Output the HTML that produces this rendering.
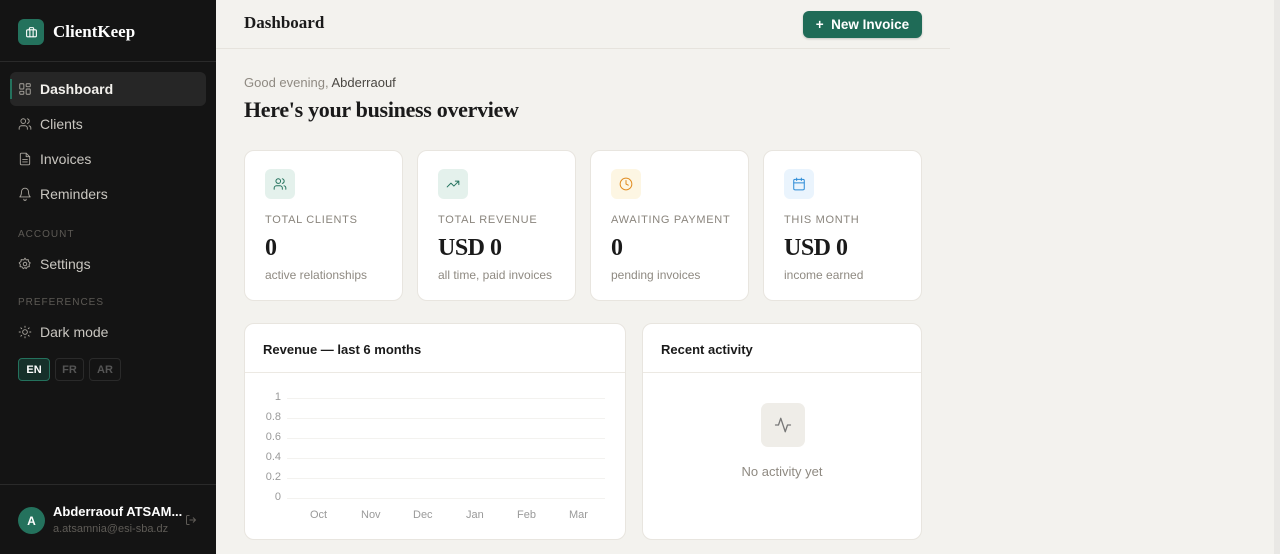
<!DOCTYPE html>
<html><head><meta charset="utf-8"><style>
*{box-sizing:border-box;margin:0;padding:0}
body{width:1280px;height:554px;overflow:hidden;background:#f3f2ee;font-family:"Liberation Sans",sans-serif;position:relative}
.sb{position:absolute;left:0;top:0;width:216px;height:554px;background:#141414;color:#c9c6c0}
.abs{position:absolute}
.nav{position:absolute;left:10px;width:196px;height:34px;display:flex;align-items:center;padding-left:8px;font-size:14px;color:#c9c6c0;gap:8px}
.nav svg{width:14px;height:14px;stroke:#a8a49d;fill:none;stroke-width:1.6;stroke-linecap:round;stroke-linejoin:round}
.sec{position:absolute;left:18px;font-size:10px;letter-spacing:1px;color:#5d5a55}
.serif{font-family:"Liberation Serif",serif;font-weight:bold}
.card{position:absolute;background:#fff;border:1px solid #e8e5df;border-radius:10px}
.ic{position:absolute;left:20px;top:18px;width:30px;height:30px;border-radius:6px;display:flex;align-items:center;justify-content:center}
.ic svg{width:14px;height:14px;fill:none;stroke-width:1.7;stroke-linecap:round;stroke-linejoin:round}
.lbl{position:absolute;left:20px;top:63px;font-size:11px;letter-spacing:0.7px;color:#8a857d}
.val{position:absolute;left:20px;top:84px;font-size:24px;color:#1a1a1a;letter-spacing:-0.5px}
.sub{position:absolute;left:20px;top:117px;font-size:12px;color:#8f8a82}
.yl{position:absolute;font-size:11px;color:#9a9a9a;text-align:right;width:20px}
.gl{position:absolute;left:42px;width:318px;height:1px;background:#f3f2ef}
.xl{position:absolute;top:185px;font-size:11px;color:#9a9a9a}
</style></head><body>
<div class="sb">
 <div class="abs" style="left:18px;top:19px;width:26px;height:26px;background:#24725d;border-radius:6px;display:flex;align-items:center;justify-content:center">
  <svg width="13" height="13" viewBox="0 0 24 24" fill="none" stroke="#fff" stroke-width="2"><rect x="3" y="7" width="18" height="13" rx="2"/><path d="M8 7V5a2 2 0 0 1 2-2h4a2 2 0 0 1 2 2v2M9 7v13M15 7v13"/></svg>
 </div>
 <div class="abs serif" style="left:53px;top:22px;font-size:17px;color:#fff">ClientKeep</div>
 <div class="abs" style="left:0;top:61px;width:216px;height:1px;background:#2a2a2a"></div>
 <div class="nav" style="top:72px;background:#262626;border-radius:6px;color:#fff"><svg viewBox="0 0 24 24"><rect x="3" y="3" width="7" height="9" rx="1"/><rect x="14" y="3" width="7" height="5" rx="1"/><rect x="14" y="12" width="7" height="9" rx="1"/><rect x="3" y="16" width="7" height="5" rx="1"/></svg><span style="font-weight:600;color:#f2f0ec">Dashboard</span></div>
 <div class="abs" style="left:10px;top:79px;width:2px;height:20px;background:#24725d"></div>
 <div class="nav" style="top:107px"><svg viewBox="0 0 24 24"><circle cx="9" cy="7" r="4"/><path d="M2 21v-2a4 4 0 0 1 4-4h6a4 4 0 0 1 4 4v2M16 3.1a4 4 0 0 1 0 7.8M22 21v-2a4 4 0 0 0-3-3.9"/></svg>Clients</div>
 <div class="nav" style="top:142px"><svg viewBox="0 0 24 24"><path d="M14 2H6a2 2 0 0 0-2 2v16a2 2 0 0 0 2 2h12a2 2 0 0 0 2-2V8z"/><path d="M14 2v6h6M8 13h8M8 17h8"/></svg>Invoices</div>
 <div class="nav" style="top:177px"><svg viewBox="0 0 24 24"><path d="M6 8a6 6 0 0 1 12 0c0 7 3 9 3 9H3s3-2 3-9M10 21a2 2 0 0 0 4 0"/></svg>Reminders</div>
 <div class="sec" style="top:229px">ACCOUNT</div>
 <div class="nav" style="top:247px"><svg viewBox="0 0 24 24"><circle cx="12" cy="12" r="3"/><path d="M12 2l2 3 3.5-.5.5 3.5 3 2-2 3 .5 3.5-3.5.5-2 3-2-2-3 2-2-3-3.5-.5.5-3.5-2-3 3-2 .5-3.5L10 5z"/></svg>Settings</div>
 <div class="sec" style="top:297px">PREFERENCES</div>
 <div class="nav" style="top:315px"><svg viewBox="0 0 24 24"><circle cx="12" cy="12" r="4"/><path d="M12 2v2M12 20v2M4.9 4.9l1.4 1.4M17.7 17.7l1.4 1.4M2 12h2M20 12h2M4.9 19.1l1.4-1.4M17.7 6.3l1.4-1.4"/></svg>Dark mode</div>
 <div class="abs" style="left:18px;top:358px;width:32px;height:23px;border:1px solid #24725d;background:#16302a;border-radius:4px;color:#fff;font-size:11px;font-weight:bold;display:flex;align-items:center;justify-content:center">EN</div>
 <div class="abs" style="left:55px;top:358px;width:29px;height:23px;border:1px solid #2a2a2a;border-radius:4px;color:#555;font-size:11px;font-weight:bold;display:flex;align-items:center;justify-content:center">FR</div>
 <div class="abs" style="left:89px;top:358px;width:32px;height:23px;border:1px solid #2a2a2a;border-radius:4px;color:#555;font-size:11px;font-weight:bold;display:flex;align-items:center;justify-content:center">AR</div>
 <div class="abs" style="left:0;top:484px;width:216px;height:1px;background:#2a2a2a"></div>
 <div class="abs" style="left:18px;top:507px;width:27px;height:27px;border-radius:50%;background:#24725d;color:#fff;font-size:12px;font-weight:bold;display:flex;align-items:center;justify-content:center">A</div>
 <div class="abs" style="left:53px;top:504px;font-size:13px;font-weight:bold;color:#fff">Abderraouf ATSAM...</div>
 <div class="abs" style="left:53px;top:523px;font-size:11px;color:#5f5c57">a.atsamnia@esi-sba.dz</div>
 <svg class="abs" style="left:185px;top:514px" width="12" height="12" viewBox="0 0 24 24" fill="none" stroke="#5f5c57" stroke-width="2"><path d="M9 21H5a2 2 0 0 1-2-2V5a2 2 0 0 1 2-2h4M16 17l5-5-5-5M21 12H9"/></svg>
</div>
<div class="abs serif" style="left:244px;top:13px;font-size:17px;color:#1a1a1a">Dashboard</div>
<div class="abs" style="left:803px;top:11px;width:119px;height:27px;background:#1f6b57;border-radius:6px;color:#fff;font-size:13.5px;font-weight:600;display:flex;align-items:center;justify-content:center;box-shadow:0 1px 2px rgba(0,0,0,.2)">+&nbsp;&nbsp;New Invoice</div>
<div class="abs" style="left:216px;top:48px;width:734px;height:1px;background:#e6e3dd"></div>
<div class="abs" style="left:1274px;top:0;width:6px;height:554px;background:#e9e8e5"></div>
<div class="abs" style="left:244px;top:75px;font-size:13px;color:#8f8a82">Good evening, <span style="color:#4a4742">Abderraouf</span></div>
<div class="abs serif" style="left:244px;top:97px;font-size:22px;color:#1a1a1a;letter-spacing:-0.3px">Here's your business overview</div>

<div class="card" style="left:244px;top:150px;width:159px;height:151px"><div class="ic" style="background:#e4f1ec"><svg viewBox="0 0 24 24" stroke="#24725d"><circle cx="9" cy="7" r="4"/><path d="M2 21v-2a4 4 0 0 1 4-4h6a4 4 0 0 1 4 4v2M16 3.1a4 4 0 0 1 0 7.8M22 21v-2a4 4 0 0 0-3-3.9"/></svg></div><div class="lbl">TOTAL CLIENTS</div><div class="val serif">0</div><div class="sub">active relationships</div></div>
<div class="card" style="left:417px;top:150px;width:159px;height:151px"><div class="ic" style="background:#e4f1ec"><svg viewBox="0 0 24 24" stroke="#24725d"><path d="M22 7l-8.5 8.5-5-5L2 17M16 7h6v6"/></svg></div><div class="lbl">TOTAL REVENUE</div><div class="val serif">USD 0</div><div class="sub">all time, paid invoices</div></div>
<div class="card" style="left:590px;top:150px;width:159px;height:151px"><div class="ic" style="background:#fdf6e3"><svg viewBox="0 0 24 24" stroke="#e08a1e"><circle cx="12" cy="12" r="10"/><path d="M12 6v6l4 2"/></svg></div><div class="lbl">AWAITING PAYMENT</div><div class="val serif">0</div><div class="sub">pending invoices</div></div>
<div class="card" style="left:763px;top:150px;width:159px;height:151px"><div class="ic" style="background:#eaf4fd"><svg viewBox="0 0 24 24" stroke="#2a8ad6"><rect x="3" y="4" width="18" height="18" rx="2"/><path d="M16 2v4M8 2v4M3 10h18"/></svg></div><div class="lbl">THIS MONTH</div><div class="val serif">USD 0</div><div class="sub">income earned</div></div>

<div class="card" style="left:244px;top:323px;width:382px;height:217px">
 <div class="abs" style="left:18px;top:18px;font-size:13px;font-weight:600;color:#1a1a1a">Revenue — last 6 months</div>
 <div class="abs" style="left:0;top:48px;width:380px;height:1px;background:#ece9e3"></div>
 <div class="yl" style="left:16px;top:67px">1</div><div class="gl" style="top:74px"></div>
 <div class="yl" style="left:16px;top:87px">0.8</div><div class="gl" style="top:94px"></div>
 <div class="yl" style="left:16px;top:107px">0.6</div><div class="gl" style="top:114px"></div>
 <div class="yl" style="left:16px;top:127px">0.4</div><div class="gl" style="top:134px"></div>
 <div class="yl" style="left:16px;top:147px">0.2</div><div class="gl" style="top:154px"></div>
 <div class="yl" style="left:16px;top:167px">0</div><div class="gl" style="top:174px"></div>
 <div class="xl" style="left:65px">Oct</div><div class="xl" style="left:116px">Nov</div><div class="xl" style="left:168px">Dec</div><div class="xl" style="left:221px">Jan</div><div class="xl" style="left:272px">Feb</div><div class="xl" style="left:324px">Mar</div>
</div>
<div class="card" style="left:642px;top:323px;width:280px;height:217px">
 <div class="abs" style="left:18px;top:18px;font-size:13px;font-weight:600;color:#1a1a1a">Recent activity</div>
 <div class="abs" style="left:0;top:48px;width:278px;height:1px;background:#ece9e3"></div>
 <div class="abs" style="left:118px;top:79px;width:44px;height:44px;border-radius:7px;background:#efede8;display:flex;align-items:center;justify-content:center"><svg width="18" height="18" viewBox="0 0 24 24" fill="none" stroke="#777" stroke-width="1.7" stroke-linecap="round" stroke-linejoin="round"><path d="M22 12h-4l-3 9L9 3l-3 9H2"/></svg></div>
 <div class="abs" style="left:0;width:278px;top:140px;text-align:center;font-size:13px;color:#8f8a82">No activity yet</div>
</div>
</body></html>
